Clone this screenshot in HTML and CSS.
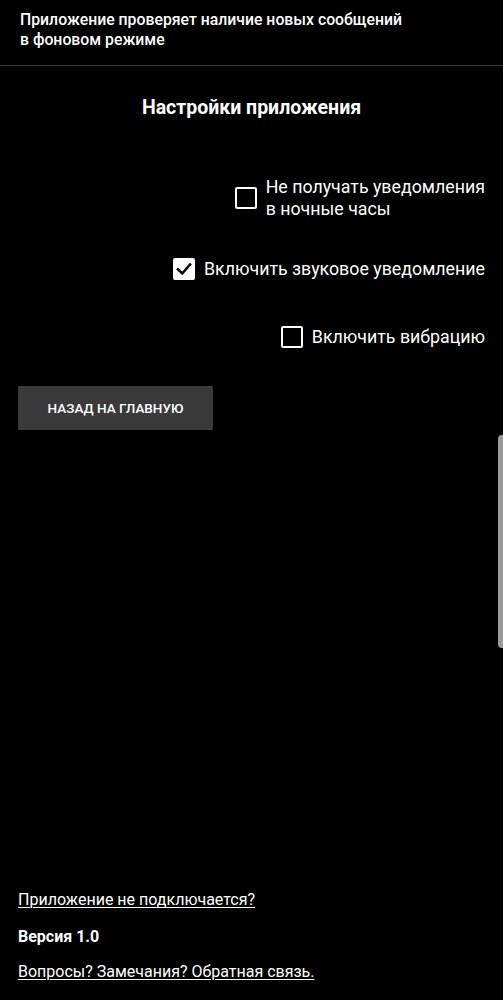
FILE: index.html
```html
<!DOCTYPE html>
<html lang="ru">
<head>
<meta charset="utf-8">
<link rel="stylesheet" href="styles.css">
</head>
<body>
<div class="page">
  <header class="status">
    Приложение проверяет наличие новых сообщений<br>в фоновом режиме
  </header>
  <h1 class="title">Настройки приложения</h1>
  <div class="options">
    <label class="opt opt-1">
      <span class="box"></span>
      <span class="txt">Не получать уведомления<br>в ночные часы</span>
    </label>
    <label class="opt opt-2">
      <span class="box checked">
        <svg viewBox="0 0 22 22" width="22" height="22"><path d="M5 11.5 L9.3 15.5 L17 6.5" fill="none" stroke="#000" stroke-width="2.6" stroke-linecap="square"/></svg>
      </span>
      <span class="txt">Включить звуковое уведомление</span>
    </label>
    <label class="opt opt-3">
      <span class="box"></span>
      <span class="txt">Включить вибрацию</span>
    </label>
  </div>
  <button class="back">НАЗАД НА ГЛАВНУЮ</button>
  <footer class="foot">
    <a class="link">Приложение не подключается?</a>
    <div class="version">Версия 1.0</div>
    <a class="link">Вопросы? Замечания? Обратная связь.</a>
  </footer>
</div>
<div class="scrollbar"></div>
</body>
</html>
```
FILE: styles.css
```css
html, body {
  margin: 0;
  padding: 0;
  background: #000;
}
body {
  font-family: Roboto, "Noto Sans", sans-serif;
  color: #fff;
  position: relative;
}
.page {
  min-height: 1000px;
  display: flex;
  flex-direction: column;
  box-sizing: border-box;
}
.status {
  padding: 10px 20px 15px;
  font-size: 15.8px;
  line-height: 20px;
  font-weight: 500;
  border-bottom: 1px solid #8a1c2a;
}
.title {
  margin: 31px 0 0;
  text-align: center;
  font-size: 19.5px;
  line-height: 22px;
  font-weight: 700;
}
.options {
  display: flex;
  flex-direction: column;
  align-items: flex-end;
  padding-right: 18px;
  margin-top: 57px;
}
.opt {
  display: flex;
  align-items: center;
  gap: 9px;
  font-size: 17.8px;
  line-height: 22px;
}
.opt-2 { margin-top: 38px; }
.opt-3 { margin-top: 46px; }
.box {
  width: 22px;
  height: 22px;
  box-sizing: border-box;
  border: 2px solid #fff;
  border-radius: 2px;
  flex: none;
  display: block;
}
.box.checked {
  background: #fff;
  border: none;
}
.box svg { display: block; }
.back {
  align-self: flex-start;
  margin: 38px 0 0 18px;
  width: 195px;
  height: 44px;
  background: #3a3a3a;
  border: none;
  border-radius: 1px;
  color: #fff;
  font-family: Roboto, "Noto Sans", sans-serif;
  font-size: 13.5px;
  font-weight: 500;
  padding: 0;
}
.foot {
  margin-top: auto;
  padding: 0 20px 18px 18px;
  font-size: 16px;
  line-height: 20px;
}
.link {
  display: block;
  text-decoration: underline;
  text-underline-offset: 2px;
  text-decoration-thickness: 1px;
}
.version {
  font-weight: 700;
  margin: 17px 0 15px;
}
.scrollbar {
  position: absolute;
  right: 0;
  top: 435px;
  width: 5px;
  height: 213px;
  background: #9b9b9b;
  border-radius: 4px 0 0 4px;
}
```
